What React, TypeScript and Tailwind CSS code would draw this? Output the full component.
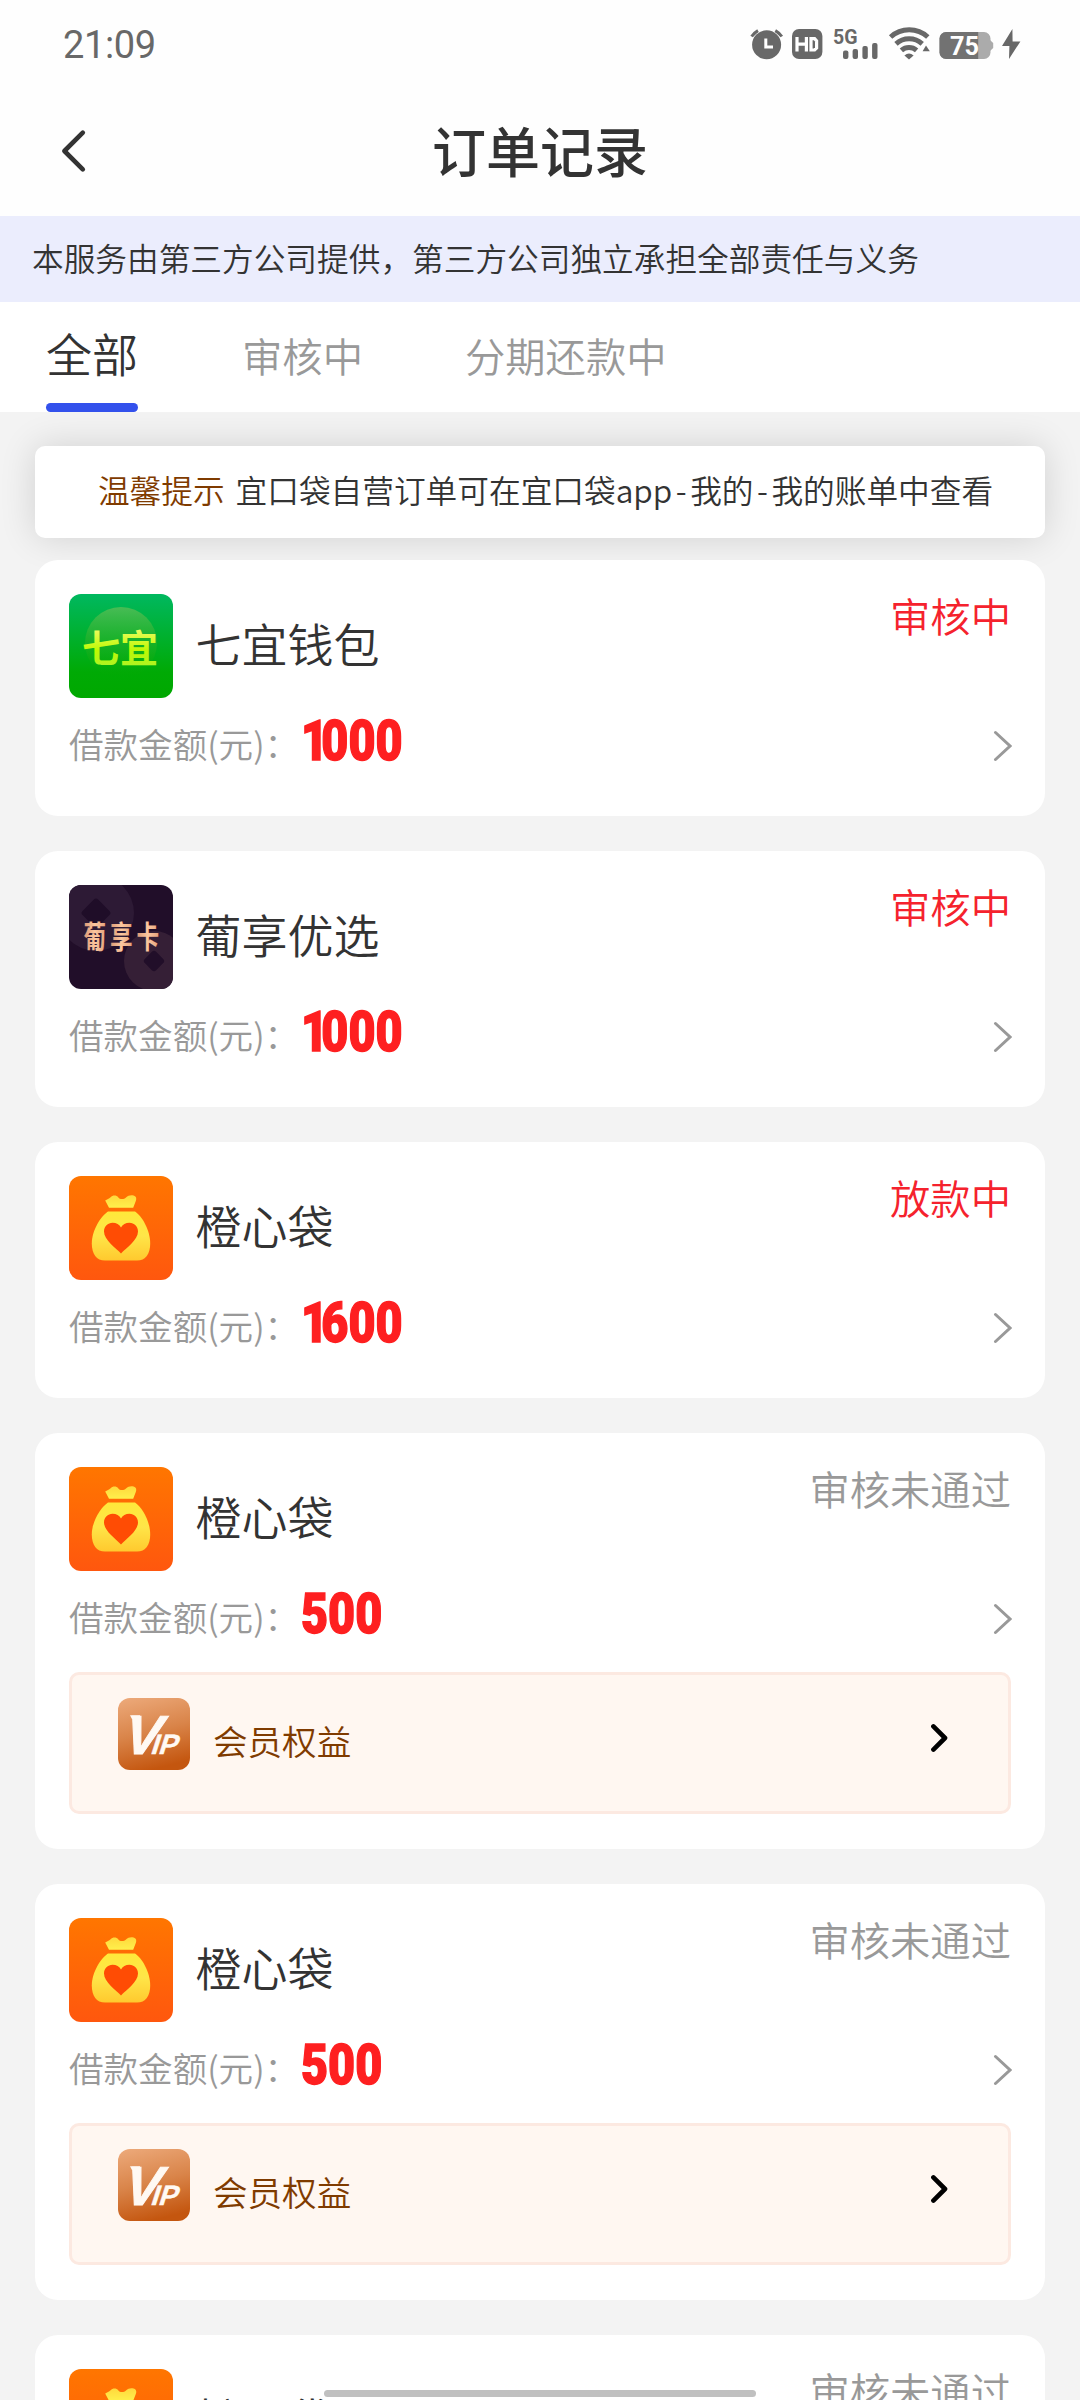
import React from 'react';

type LogoKind = 'qiyi' | 'puxiang' | 'bag';

interface Order {
  id: number;
  name: string;
  logo: LogoKind;
  amount: number;
  status: string;
  active: boolean;
  vip?: boolean;
}

const ORDERS: Order[] = [
  { id: 1, name: '七宜钱包', logo: 'qiyi', amount: 1000, status: '审核中', active: true },
  { id: 2, name: '葡享优选', logo: 'puxiang', amount: 1000, status: '审核中', active: true },
  { id: 3, name: '橙心袋', logo: 'bag', amount: 1600, status: '放款中', active: true },
  { id: 4, name: '橙心袋', logo: 'bag', amount: 500, status: '审核未通过', active: false, vip: true },
  { id: 5, name: '橙心袋', logo: 'bag', amount: 500, status: '审核未通过', active: false, vip: true },
  { id: 6, name: '橙心袋', logo: 'bag', amount: 500, status: '审核未通过', active: false, vip: true },
];

const CJK = "'Noto Sans CJK SC', sans-serif";

function StatusIcons() {
  return (
    <svg width="280" height="36" viewBox="746 24 280 36" fill="#686868">
      {/* alarm */}
      <circle cx="766.6" cy="42.8" r="14.5" />
      <path d="M751.6 34.5A20 20 0 0 1 758 28.6M775.3 28.6A20 20 0 0 1 781.8 34.5" fill="none" stroke="#686868" strokeWidth="3" />
      <path d="M765.8 36.5V45H773" fill="none" stroke="#fff" strokeWidth="3" />
      {/* HD */}
      <rect x="792" y="27" width="30.4" height="30" rx="7" />
      <path d="M797 35V49.5M806.4 35V49.5M797 42.2H806.4M811 36.6H814.6L816.6 38.8V46L814.6 48H811Z" fill="none" stroke="#fff" strokeWidth="3.2" />
      {/* network */}
      <text x="833" y="41.6" fontSize="20" fontWeight="700" fontFamily="Roboto, sans-serif" textLength="24.5" lengthAdjust="spacingAndGlyphs">5G</text>
      <rect x="843" y="48.5" width="5.4" height="8.5" rx="2" />
      <rect x="852.6" y="47" width="5.4" height="10" rx="2" />
      <rect x="862.4" y="44" width="5.4" height="13" rx="2" />
      <rect x="872.1" y="41" width="5.4" height="16" rx="2" />
      {/* wifi */}
      <g fill="none" stroke="#686868" strokeWidth="5">
        <path d="M890.6 35A27.5 27.5 0 0 1 927.8 35" />
        <path d="M896 41.8A19.5 19.5 0 0 1 922.2 41.8" />
        <path d="M901.4 48.4A11.5 11.5 0 0 1 916.6 48.4" />
      </g>
      <path d="M904.4 53.5Q909 49.6 913.6 53.5L909 57.4Z" />
      <path d="M922.6 49.2L926 43.6L929.8 49.2Z" />
      {/* battery */}
      <rect x="939.5" y="30" width="51" height="27" rx="6.5" fill="#ababab" />
      <path d="M990 38L993.2 41V46L990 49Z" fill="#ababab" />
      <path d="M946 30H978.2V57H946A6.5 6.5 0 0 1 939.5 50.5V36.5A6.5 6.5 0 0 1 946 30Z" fill="#727272" />
      <text x="950" y="53" fontSize="26" fontWeight="700" fill="#fff" fontFamily="Roboto, sans-serif" textLength="29" lengthAdjust="spacingAndGlyphs">75</text>
      <path d="M1012.4 27L1002 44H1009.4L1009 57L1020.4 39.4H1012.6Z" />
    </svg>
  );
}

function QiyiLogo() {
  return (
    <svg width="104" height="104" viewBox="0 0 104 104" className="rounded-xl">
      <defs>
        <linearGradient id="qBg" x1="0" y1="0" x2="0" y2="1">
          <stop offset="0" stopColor="#00b85f" />
          <stop offset="0.75" stopColor="#00aa05" />
          <stop offset="1" stopColor="#00a800" />
        </linearGradient>
        <linearGradient id="qDisc" x1="0" y1="0" x2="0" y2="1">
          <stop offset="0" stopColor="#48bc55" />
          <stop offset="0.75" stopColor="#10ac10" stopOpacity="0.5" />
          <stop offset="1" stopColor="#00a800" stopOpacity="0" />
        </linearGradient>
        <linearGradient id="qText" x1="0" y1="0" x2="0" y2="1">
          <stop offset="0.1" stopColor="#fbfc7a" />
          <stop offset="0.6" stopColor="#bdf903" />
          <stop offset="1" stopColor="#a8f030" />
        </linearGradient>
      </defs>
      <rect width="104" height="104" fill="url(#qBg)" />
      <circle cx="52" cy="49" r="36" fill="url(#qDisc)" />
      <text x="13" y="67.5" fontSize="38" fontWeight="700" fontFamily={CJK} fill="url(#qText)">七宜</text>
    </svg>
  );
}

function PuxiangLogo() {
  return (
    <svg width="104" height="104" viewBox="0 0 104 104" className="rounded-xl">
      <defs>
        <linearGradient id="pText" x1="0" y1="0" x2="1" y2="0">
          <stop offset="0" stopColor="#d99774" />
          <stop offset="0.5" stopColor="#fcc79f" />
          <stop offset="1" stopColor="#e3a17c" />
        </linearGradient>
      </defs>
      <rect width="104" height="104" fill="#210e29" />
      <circle cx="27" cy="28" r="38" fill="#2d1a35" />
      <rect x="16" y="17" width="22" height="22" rx="3" fill="#1f0d28" transform="rotate(45 27 28)" />
      <circle cx="85" cy="76" r="30" fill="#351f36" />
      <rect x="77" y="68" width="16" height="16" rx="3" fill="#210e29" transform="rotate(45 85 76)" />
      <g fill="url(#pText)" fontSize="31" fontWeight="700" fontFamily={CJK}>
        <text transform="translate(14.5 63) scale(0.73 1)">葡</text>
        <text transform="translate(41 63) scale(0.73 1)">享</text>
        <text transform="translate(67.5 63) scale(0.73 1)">卡</text>
      </g>
    </svg>
  );
}

function BagLogo() {
  return (
    <svg width="104" height="104" viewBox="0 0 104 104" className="rounded-xl">
      <defs>
        <linearGradient id="bBg" x1="0" y1="0" x2="0" y2="1">
          <stop offset="0" stopColor="#ff7600" />
          <stop offset="1" stopColor="#ff570e" />
        </linearGradient>
        <linearGradient id="bTie" x1="0" y1="0" x2="0" y2="1">
          <stop offset="0" stopColor="#ffd83c" />
          <stop offset="1" stopColor="#fff04c" />
        </linearGradient>
        <linearGradient id="bBody" x1="0" y1="0" x2="0" y2="1">
          <stop offset="0" stopColor="#ffe93a" />
          <stop offset="0.5" stopColor="#ffe548" />
          <stop offset="1" stopColor="#ffc92e" />
        </linearGradient>
      </defs>
      <rect width="104" height="104" fill="url(#bBg)" />
      <path d="M36.2 24.6C38 23 40 22.8 41.6 21.2C43.6 19 47.4 18.8 49.4 21.4C50.8 23.4 54.8 23.6 57 21.4C59 19.2 62 18.8 64.6 19.4C67.6 20.2 67.6 23 66.8 25L64.2 31.8H40Z" fill="url(#bTie)" />
      <path d="M39 35.4H66C73 40 81.2 54 81.2 67.5C81.2 78 76.5 84.6 68 84.6H36C27.5 84.6 22.8 78 22.8 67.5C22.8 54 32 40 39 35.4Z" fill="url(#bBody)" />
      <path d="M52 77.4C47 72 35 64 35 55.4C35 50.5 38.8 46.8 43.6 46.8C47.2 46.8 50.6 48.6 52 51.4C53.4 48.6 56.8 46.8 60.4 46.8C65.2 46.8 69 50.5 69 55.4C69 64 57 72 52 77.4Z" fill="#ff4c04" />
    </svg>
  );
}

function VipBadge() {
  return (
    <svg width="72" height="72" viewBox="0 0 72 72" className="rounded-xl">
      <defs>
        <linearGradient id="vBg" x1="0.2" y1="0" x2="0.45" y2="1">
          <stop offset="0" stopColor="#eba777" />
          <stop offset="0.5" stopColor="#d98449" />
          <stop offset="1" stopColor="#c4560f" />
        </linearGradient>
      </defs>
      <rect width="72" height="72" fill="url(#vBg)" />
      <text transform="translate(2 56) skewX(-18)" fill="#fff9f3" stroke="#fff9f3" fontWeight="700" fontFamily="'Liberation Sans', sans-serif">
        <tspan fontSize="55" strokeWidth="1">V</tspan>
        <tspan dx="-7" fontSize="28" strokeWidth="0.4">IP</tspan>
      </text>
      <path d="M12 17.2H22V21H14Z" fill="#fff9f3" />
    </svg>
  );
}

const LOGOS: Record<LogoKind, React.FC> = { qiyi: QiyiLogo, puxiang: PuxiangLogo, bag: BagLogo };

// condensed red digits, the "1" is set tighter than the rest
function Amount({ value }: { value: number }) {
  return (
    <span className="mt-[3px] origin-left scale-x-[0.85] font-['Roboto',sans-serif] text-[55px] font-black leading-none text-[#fe1f20] [-webkit-text-stroke:1.4px_#fe1f20]">
      {String(value).split('').map((d, i) => (
        <span key={i} className={d === '1' ? 'tracking-[-8px]' : ''}>{d}</span>
      ))}
    </span>
  );
}

function VipRow() {
  return (
    <div className="mt-[18px] h-[142px] rounded-[10px] border-[3px] border-[#fce9e1] bg-[#fff7f1] pl-[46px] pr-[60px] pt-[23px]">
      <div className="flex h-[72px] items-center">
        <VipBadge />
        <span className="ml-[23px] mt-3 text-[34.56px] leading-none text-[#7f3b00]">会员权益</span>
        <svg width="18" height="30" viewBox="0 0 18 30" className="ml-auto mt-[7px]" fill="none" stroke="#000" strokeWidth="4.6" strokeLinecap="round" strokeLinejoin="round">
          <path d="M3.4 3.4L15 15L3.4 26.6" />
        </svg>
      </div>
    </div>
  );
}

function OrderCard({ order }: { order: Order }) {
  const Logo = LOGOS[order.logo];
  return (
    <div className="rounded-[23px] bg-white pb-[35px] pl-[34px] pr-[34px] pt-[34px]">
      <div className="flex h-[104px]">
        <Logo />
        <span className="ml-[22.5px] mt-[23px] text-[46px] leading-[50px] text-[#333]">{order.name}</span>
        <span className={`-mt-px ml-auto text-[40.32px] leading-[44px] ${order.active ? 'text-[#f5222d]' : 'text-[#999]'}`}>
          {order.status}
        </span>
      </div>
      <div className="flex h-[83px] items-center">
        <span className="mr-0.5 mt-2 whitespace-nowrap text-[34.56px] leading-none text-[#999]">借款金额(元)：</span>
        <Amount value={order.amount} />
        <svg width="20" height="32" viewBox="0 0 20 32" className="-mr-px ml-auto mt-3" fill="none" stroke="#999" strokeWidth="3" strokeLinecap="round">
          <path d="M3.5 2.5L18 16L3.5 29.5" />
        </svg>
      </div>
      {order.vip && <VipRow />}
    </div>
  );
}

export default function App() {
  return (
    <div className="relative h-[2400px] w-[1080px] overflow-hidden bg-[#f3f3f3] font-['Noto_Sans_CJK_SC',sans-serif] font-[350] text-[#333]">
      <header className="h-[216px] bg-[#fefefe]">
        <div className="flex h-[84px] items-center justify-between pl-[63px] pr-[54px] pt-1">
          <span className="mt-0.5 font-['Roboto',sans-serif] text-[38px] font-normal leading-none tracking-[-0.4px] text-[#686868]">21:09</span>
          <StatusIcons />
        </div>
        <div className="flex h-[132px] items-center pl-[60px] pr-[87px]">
          <svg width="27" height="44" viewBox="0 0 27 44" className="mt-0.5" fill="none" stroke="#333" strokeWidth="4.6" strokeLinecap="round" strokeLinejoin="round">
            <path d="M22.8 3.6L4.4 22L22.8 40.4" />
          </svg>
          <h1 className="flex-1 text-center text-[54px] font-medium leading-none">订单记录</h1>
        </div>
      </header>

      <div className="flex h-[86px] items-center bg-[#ebedfd] pb-[3px] pl-8 text-[31.68px] leading-none">
        本服务由第三方公司提供，第三方公司独立承担全部责任与义务
      </div>

      <nav className="flex h-[110px] bg-white pl-[46px]">
        <div className="flex w-[92px] flex-col justify-between">
          <span className="mt-[25px] text-[46px] leading-[50px]">全部</span>
          <span className="h-[9px] rounded-[5px] bg-[#3351ec]" />
        </div>
        <span className="ml-[104px] mt-[31px] text-[40.32px] leading-[44px] text-[#999]">审核中</span>
        <span className="ml-[102px] mt-[31px] text-[40.32px] leading-[44px] text-[#999]">分期还款中</span>
      </nav>

      <main className="px-[35px] pt-[34px]">
        <div className="flex h-[92px] items-center justify-center whitespace-nowrap rounded-[10px] bg-white pb-[5px] pl-[11px] text-[31.68px] leading-none shadow-[0_0_36px_rgba(0,0,0,0.14)]">
          <span className="mr-[11px] text-[#7f3b00]">温馨提示</span>
          <span>
            宜口袋自营订单可在宜口袋app<span className="mx-[3.5px]">-</span>我的<span className="mx-[3.5px]">-</span>我的账单中查看
          </span>
        </div>
        <div className="relative mt-[22px] flex flex-col gap-[35px]">
          {ORDERS.map(order => <OrderCard key={order.id} order={order} />)}
        </div>
      </main>

      {/* gesture bar */}
      <div className="absolute left-[324px] top-[2390px] h-[7px] w-[432px] rounded-full bg-[#c0c0c0]" />
    </div>
  );
}
